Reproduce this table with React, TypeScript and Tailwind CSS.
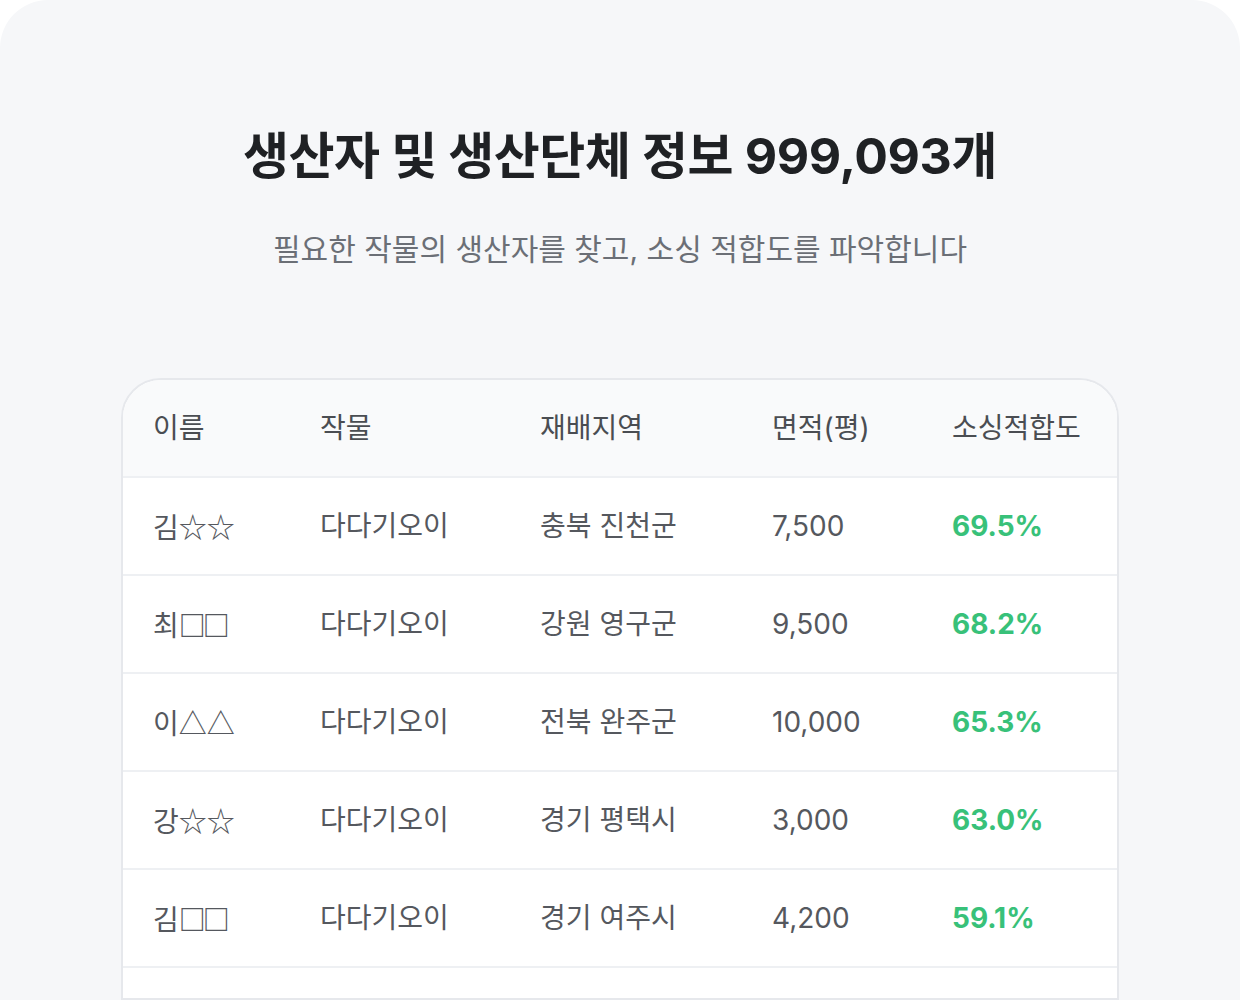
import React from 'react';

type Row = {
  name: string;
  crop: string;
  region: string;
  area: string;
  score: string;
};

const rows: Row[] = [
  { name: '김☆☆', crop: '다다기오이', region: '충북 진천군', area: '7,500', score: '69.5%' },
  { name: '최□□', crop: '다다기오이', region: '강원 영구군', area: '9,500', score: '68.2%' },
  { name: '이△△', crop: '다다기오이', region: '전북 완주군', area: '10,000', score: '65.3%' },
  { name: '강☆☆', crop: '다다기오이', region: '경기 평택시', area: '3,000', score: '63.0%' },
  { name: '김□□', crop: '다다기오이', region: '경기 여주시', area: '4,200', score: '59.1%' },
];

const cols = 'grid grid-cols-[167px_220px_232px_180px_1fr] items-center pl-[30px] pr-8';

// squares in the reference are drawn heavier and tighter than the regular CJK glyph
const Name: React.FC<{ text: string }> = ({ text }) => {
  const first = text.slice(0, 1);
  const rest = text.slice(1);
  if (rest.includes('□')) {
    return (
      <span className="font-['Noto_Sans_CJK_KR',sans-serif]">
        {first}
        <span className="font-bold tracking-[-3px] text-[27px]">{rest}</span>
      </span>
    );
  }
  return <span className="font-['Noto_Sans_CJK_KR',sans-serif]">{text}</span>;
};

const App: React.FC = () => {
  return (
    <div className="w-[1240px] h-[1000px] overflow-hidden bg-white font-['Inter','Noto_Sans_CJK_KR',sans-serif]">
      <div className="h-full rounded-t-[48px] bg-[#f6f7f9] flex flex-col items-center pt-[124px]">
        <h1 className="text-[50px] leading-[64px] font-bold text-[#1f2124] tracking-[-0.4px]">
          생산자 및 생산단체 정보 999,093개
        </h1>
        <p className="mt-[41px] text-[30px] leading-[40px] text-[#6b6f76]">
          필요한 작물의 생산자를 찾고, 소싱 적합도를 파악합니다
        </p>

        <div className="mt-[109px] w-[998px] rounded-t-[40px] border-2 border-[#e6e8ec] overflow-hidden bg-white">
          <div className={`${cols} h-[96px] bg-[#f9fafb] text-[28px] text-[#4a4d52]`}>
            <span>이름</span>
            <span>작물</span>
            <span>재배지역</span>
            <span>면적(평)</span>
            <span>소싱적합도</span>
          </div>
          {rows.map((r) => (
            <div
              key={r.name + r.region}
              className={`${cols} h-[98px] border-t-2 border-[#eef0f3] text-[28px] text-[#55585e]`}
            >
              <Name text={r.name} />
              <span>{r.crop}</span>
              <span>{r.region}</span>
              <span>{r.area}</span>
              <span className="font-bold text-[#38c179]">{r.score}</span>
            </div>
          ))}
          <div className="h-[98px] border-t-2 border-[#eef0f3]" />
        </div>
      </div>
    </div>
  );
};

export default App;
